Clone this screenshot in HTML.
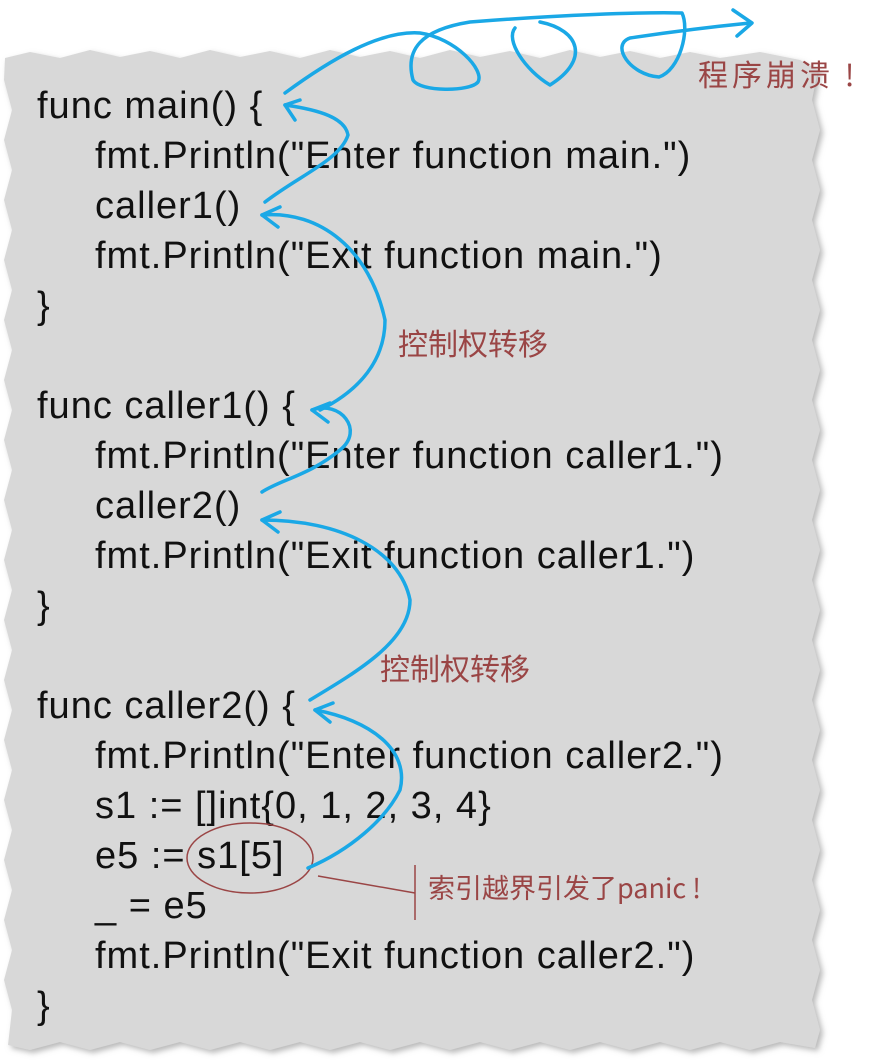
<!DOCTYPE html>
<html><head><meta charset="utf-8"><style>
html,body{margin:0;padding:0;background:#fff;width:887px;height:1060px;overflow:hidden}
svg{display:block}
.c{font-family:"Liberation Sans",sans-serif;font-size:38px;letter-spacing:1px;fill:#111}
.r{font-family:"WenQuanYi Zen Hei","Noto Sans CJK SC",sans-serif;font-size:30px;fill:#9a4545}
</style></head><body>
<svg width="887" height="1060" viewBox="0 0 887 1060">
<defs><filter id="s"><feDropShadow dx="3" dy="3" stdDeviation="3" flood-color="#888" flood-opacity="0.6"/></filter></defs>
<path filter="url(#s)" fill="#d8d8d8" d="M5 58 L30 52 L60 58 L90 50 L120 57 L150 51 L180 58 L210 50 L240 57 L270 51 L300 58 L330 50 L360 57 L390 51 L420 58 L450 50 L480 57 L510 51 L540 58 L570 50 L600 57 L630 51 L660 58 L690 52 L720 58 L760 52 L800 60 L818 70 L812 100 L820 130 L812 160 L820 190 L812 220 L820 250 L812 280 L820 310 L812 340 L820 370 L812 400 L820 430 L812 460 L820 490 L812 520 L820 550 L812 580 L820 610 L812 640 L820 670 L812 700 L820 730 L812 760 L820 790 L812 820 L820 850 L812 880 L820 910 L812 940 L820 970 L812 1000 L820 1030 L815 1048 L780 1042 L750 1050 L720 1042 L690 1050 L660 1042 L630 1050 L600 1042 L570 1050 L540 1042 L510 1050 L480 1042 L450 1050 L420 1042 L390 1050 L360 1042 L330 1050 L300 1042 L270 1050 L240 1042 L210 1050 L180 1042 L150 1050 L120 1042 L90 1050 L60 1042 L30 1050 L8 1045 L12 1010 L4 980 L12 950 L4 920 L12 890 L4 860 L12 830 L4 800 L12 770 L4 740 L12 710 L4 680 L12 650 L4 620 L12 590 L4 560 L12 530 L4 500 L12 470 L4 440 L12 410 L4 380 L12 350 L4 320 L12 290 L4 260 L12 230 L4 200 L12 170 L4 140 L12 110 L4 80 Z"/>
<g class="c">
<text x="37" y="118">func main() {</text>
<text x="95" y="168">fmt.Println("Enter function main.")</text>
<text x="95" y="218">caller1()</text>
<text x="95" y="268">fmt.Println("Exit function main.")</text>
<text x="37" y="318">}</text>
<text x="37" y="418">func caller1() {</text>
<text x="95" y="468">fmt.Println("Enter function caller1.")</text>
<text x="95" y="518">caller2()</text>
<text x="95" y="568">fmt.Println("Exit function caller1.")</text>
<text x="37" y="618">}</text>
<text x="37" y="718">func caller2() {</text>
<text x="95" y="768">fmt.Println("Enter function caller2.")</text>
<text x="95" y="818">s1 := []int{0, 1, 2, 3, 4}</text>
<text x="95" y="868">e5 := s1[5]</text>
<text x="95" y="918">_ = e5</text>
<text x="95" y="968">fmt.Println("Exit function caller2.")</text>
<text x="37" y="1018">}</text>
</g>
<g class="r">
<text x="698" y="86" letter-spacing="4">程序崩溃 !</text>
<text x="398" y="355">控制权转移</text>
<text x="380" y="680">控制权转移</text>
<text x="428" y="898" style="font-size:27px">索引越界引发了panic !</text>
</g>
<g fill="none" stroke="#9a4545" stroke-width="1.5">
<ellipse cx="250" cy="858" rx="63" ry="35"/>
<path d="M318 876 L415 893"/>
<path d="M415 865 L415 920"/>
</g>
<g fill="none" stroke="#1aa8e6" stroke-width="3.5" stroke-linecap="round" stroke-linejoin="round">
<path d="M285 93 C330 60 380 30 420 33 C455 38 485 70 478 82 C470 92 420 92 413 80 C405 50 420 30 470 22 C560 15 640 12 682 13 C690 30 680 70 659 77 C630 75 610 45 630 38 C670 32 710 27 750 23"/>
<path d="M540 22 C580 30 590 60 550 85 C525 70 505 40 515 28"/>
<path d="M733 10 L752 23 L737 36"/>
<path d="M265 202 C300 175 340 160 348 135 C345 118 320 110 285 105"/>
<path d="M285 105 L300 100 M285 105 L295 120"/>
<path d="M262 215 C320 210 370 250 385 320 C385 360 360 390 320 410"/>
<path d="M262 215 L280 207 M262 215 L278 227"/>
<path d="M312 410 C340 400 365 430 340 450 C310 475 280 480 262 492"/>
<path d="M312 410 L330 403 M312 410 L328 422"/>
<path d="M262 520 C340 520 400 550 410 600 C410 640 360 670 310 700"/>
<path d="M262 520 L280 512 M262 520 L278 532"/>
<path d="M315 710 C370 720 410 750 400 790 C385 820 350 850 308 868"/>
<path d="M315 710 L333 703 M315 710 L330 722"/>
</g>
</svg>
</body></html>
